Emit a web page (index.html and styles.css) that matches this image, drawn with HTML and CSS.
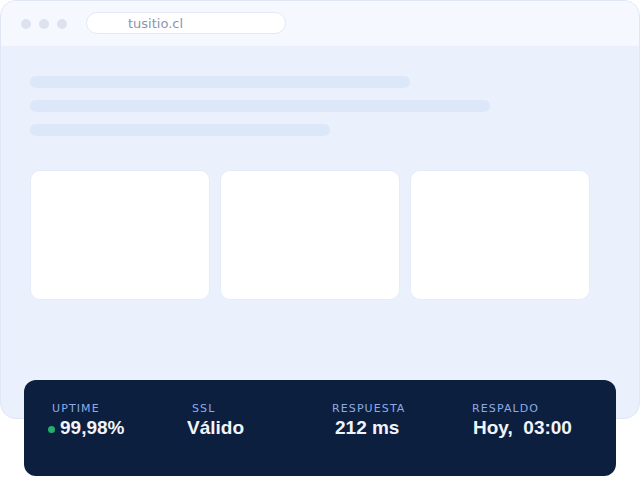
FILE: index.html
```html
<!DOCTYPE html>
<html lang="es">
<head>
<meta charset="utf-8">
<title>tusitio.cl</title>
<link rel="stylesheet" href="styles.css">
</head>
<body>
<div class="stage">
  <div class="window">
    <div class="topbar">
      <div class="dots"><span class="dot"></span><span class="dot"></span><span class="dot"></span></div>
      <div class="url"><span class="url-mask"></span><span class="url-text">tusitio.cl</span></div>
    </div>
    <div class="content">
      <div class="lines">
        <div class="line l1"></div>
        <div class="line l2"></div>
        <div class="line l3"></div>
      </div>
      <div class="cards">
        <div class="card"></div>
        <div class="card"></div>
        <div class="card"></div>
      </div>
    </div>
  </div>
  <div class="panel">
    <div class="stat">
      <div class="label">UPTIME</div>
      <div class="value v1"><span class="live"></span>99,98%</div>
    </div>
    <div class="stat">
      <div class="label">SSL</div>
      <div class="value v2">Válido</div>
    </div>
    <div class="stat">
      <div class="label">RESPUESTA</div>
      <div class="value v3">212 ms</div>
    </div>
    <div class="stat">
      <div class="label">RESPALDO</div>
      <div class="value v4">Hoy,&nbsp; 03:00</div>
    </div>
  </div>
</div>
</body>
</html>
```
FILE: styles.css
```css
* { box-sizing: border-box; }
html, body { margin: 0; padding: 0; background: #ffffff; }
body { width: 640px; height: 480px; overflow: hidden; font-family: "DejaVu Sans", sans-serif; }

.stage { width: 640px; height: 480px; }

.window {
  width: 640px;
  height: 419px;
  border: 1px solid #dfe6f4;
  border-radius: 16px;
  background: #eaf0fc;
  overflow: hidden;
}

.topbar {
  height: 45px;
  background: #f5f8fe;
  display: flex;
  align-items: center;
  padding-left: 20px;
}
.dots { display: flex; gap: 8px; }
.dot { width: 10px; height: 10px; border-radius: 50%; background: #dce2ee; display: block; }

.url {
  margin-left: 19px;
  width: 200px;
  height: 22px;
  margin-top: -1px;
  border: 1px solid #e2e8f4;
  border-radius: 11px;
  background: #ffffff;
  display: flex;
  align-items: center;
}
.url-mask { width: 41px; }
.url-text { font-size: 13px; color: #8a95aa; line-height: 1; }

.content { padding: 30px 29px 0 29px; }
.lines { display: flex; flex-direction: column; gap: 12px; }
.line { height: 12px; border-radius: 6px; background: #dce7f9; }
.l1 { width: 380px; }
.l2 { width: 460px; }
.l3 { width: 300px; }

.cards { display: flex; gap: 10px; margin-top: 34px; }
.card {
  width: 180px;
  height: 130px;
  background: #ffffff;
  border: 1px solid #e5ecf9;
  border-radius: 10px;
}

.panel {
  position: relative;
  margin: -39px 0 0 24px;
  width: 592px;
  height: 96px;
  border-radius: 12px;
  background: #0d1f3f;
  display: flex;
  padding: 22px 0 0 28px;
}
.stat { width: 140px; }
.label {
  font-family: "DejaVu Sans", sans-serif;
  font-size: 11px;
  letter-spacing: 1.1px;
  color: #8cabe6;
  line-height: 13px;
}
.value {
  font-family: "Liberation Sans", Arial, sans-serif;
  font-weight: bold;
  font-size: 19px;
  color: #f1f4fa;
  line-height: 22px;
  margin-top: 2px;
  display: flex;
  align-items: center;
}
.live { width: 7px; height: 7px; border-radius: 50%; background: #22b06a; margin: 2px 5px 0 -4px; display: block; }
.v2 { margin-left: -5px; }
.v3 { margin-left: 3px; }
.v4 { margin-left: 1px; }
```
